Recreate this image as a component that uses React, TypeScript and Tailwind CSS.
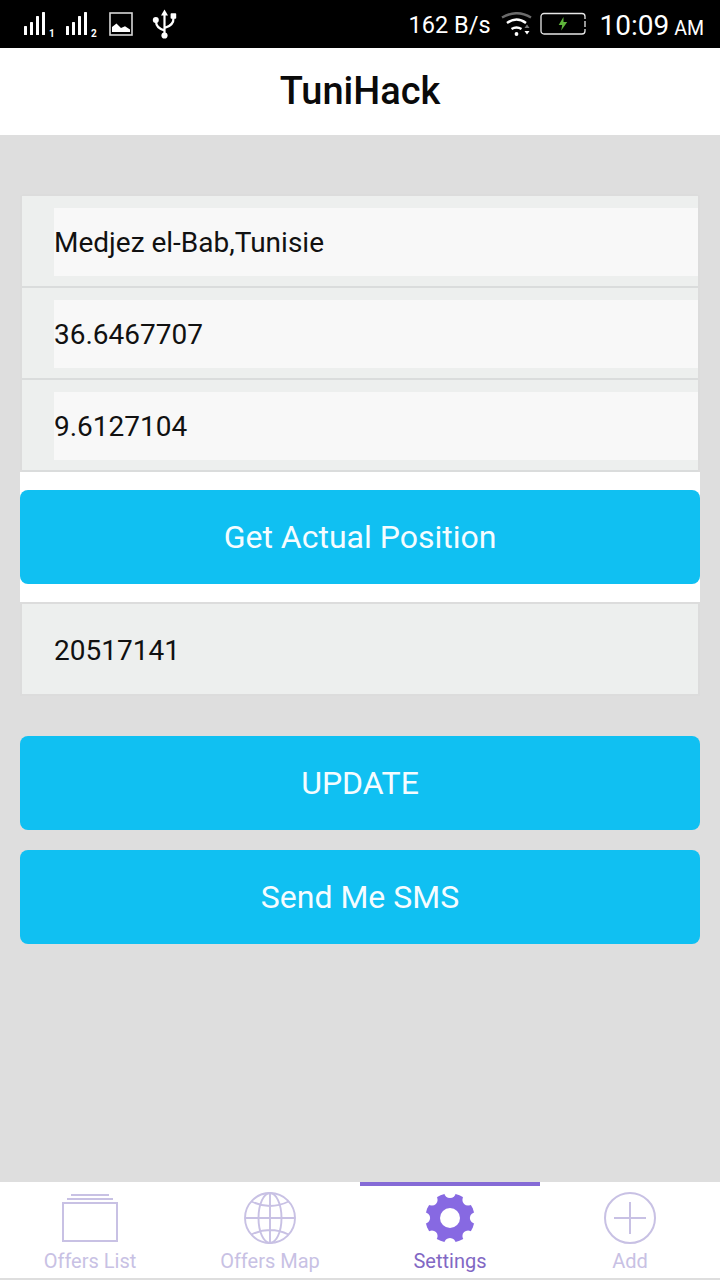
import type { ReactNode } from "react";

const SignalIcon = () => (
  <svg width="26" height="26" viewBox="0 0 26 26" fill="#fff">
    <rect x="0" y="14" width="3" height="9" rx="0.6" />
    <rect x="6" y="10" width="3" height="13" rx="0.6" />
    <rect x="12" y="4" width="3" height="19" rx="0.6" />
    <rect x="18" y="0" width="3" height="23" rx="0.6" />
  </svg>
);

const Signal = ({ sim }: { sim: string }) => (
  <div className="relative w-[42px] h-[26px]">
    <SignalIcon />
    <span className="absolute left-[25px] top-[17px] text-[10px] leading-[10px] font-bold">{sim}</span>
  </div>
);

const PictureIcon = () => (
  <svg width="24" height="24" viewBox="0 0 24 24">
    <rect x="1" y="1" width="22" height="22" fill="none" stroke="#d8d8d8" strokeWidth="1.6" />
    <path d="M3 20V15L7.5 11.5L12 16L16 14.2L21 17.5V20Z" fill="#fff" />
  </svg>
);

const UsbIcon = () => (
  <svg width="26" height="32" viewBox="0 0 26 32" fill="#fff">
    <path
      d="M12.5 5V26M4 12.5Q4 19 12.5 21.5M21.5 8.5Q22 16.5 12.5 19"
      fill="none"
      stroke="#fff"
      strokeWidth="2.2"
    />
    <path d="M12.5 0.5L16 6.5H9Z" />
    <circle cx="3.8" cy="11" r="3" />
    <rect x="18.6" y="4.2" width="5.6" height="5.6" rx="0.8" />
    <circle cx="12.5" cy="26.5" r="3.1" />
  </svg>
);

const WifiIcon = () => (
  <svg width="32" height="26" viewBox="0 0 32 26" fill="none" strokeWidth="2.5">
    <path d="M1 5.5Q15.5 -3 30 5.5" stroke="#6b6b6b" />
    <path d="M6 11Q15.5 4 25 11" stroke="#fff" />
    <path d="M10.5 17Q15.5 14 20.5 17" stroke="#fff" />
    <circle cx="15.5" cy="22" r="1.9" fill="#fff" />
    <path d="M23.5 16L26 12.5L28.5 16Z" fill="#777" />
    <path d="M23.5 19L26 22.5L28.5 19Z" fill="#fff" />
  </svg>
);

const BatteryIcon = () => (
  <svg width="46" height="24" viewBox="0 0 46 24">
    <rect x="1" y="1.5" width="44" height="20.5" rx="3" fill="none" stroke="#e8e8e8" strokeWidth="1.3" />
    <path d="M45 7V9M45 15V17" stroke="#000" strokeWidth="2.5" />
    <path d="M23.5 5L18.7 13H22.2L21.2 18.5L27.2 10H23.5Z" fill="#5fb53a" />
  </svg>
);

const ListIcon = () => (
  <svg width="56" height="56" viewBox="0 0 56 56" fill="none" stroke="currentColor" strokeWidth="2">
    <path d="M9 5H47M5 9H51" />
    <rect x="1" y="13" width="54" height="38" />
  </svg>
);

const GlobeIcon = () => (
  <svg width="56" height="56" viewBox="-28 -28 56 56" fill="none" stroke="currentColor" strokeWidth="1.9">
    <circle r="25" />
    <ellipse rx="11.5" ry="25" />
    <path d="M0 -25V25M-25 0H25M-18.5 -16.5Q0 -7.5 18.5 -16.5M-18.5 16.5Q0 7.5 18.5 16.5" />
  </svg>
);

const GearIcon = () => (
  <svg width="56" height="56" viewBox="-28 -28 56 56">
    <mask id="gear" maskUnits="userSpaceOnUse" x="-28" y="-28" width="56" height="56">
      <circle r="24.7" fill="#fff" />
      <circle r="10" fill="#000" />
      {[0, 45, 90, 135, 180, 225, 270, 315].map((a) => (
        <circle key={a} cy="-25.6" r="5.7" fill="#000" transform={`rotate(${a})`} />
      ))}
    </mask>
    <rect x="-28" y="-28" width="56" height="56" fill="#8769e2" mask="url(#gear)" />
  </svg>
);

const AddIcon = () => (
  <svg width="56" height="56" viewBox="-28 -28 56 56" fill="none" stroke="currentColor" strokeWidth="2">
    <circle r="25" />
    <path d="M0 -16V16M-16 0H16" />
  </svg>
);

const Field = ({ value }: { value: string }) => (
  <div className="h-[92px] border-b-2 border-[#dadcdc] bg-[#edefee] pt-3 pl-8">
    <div className="h-[68px] bg-[#f8f8f8] text-[28px] leading-[70px] text-[#111]">{value}</div>
  </div>
);

const BlueButton = ({ children }: { children: ReactNode }) => (
  <button className="block w-full h-[94px] rounded-lg bg-[#10c0f2] text-[32px] text-[#f5fcff]">
    {children}
  </button>
);

const tabs = [
  { label: "Offers List", icon: ListIcon },
  { label: "Offers Map", icon: GlobeIcon },
  { label: "Settings", icon: GearIcon, active: true },
  { label: "Add", icon: AddIcon },
];

export default function App() {
  return (
    <div className="flex flex-col w-[720px] h-[1280px] overflow-hidden bg-[#dedede] font-['Roboto',sans-serif]">
      {/* Status bar */}
      <div className="flex h-12 shrink-0 justify-between bg-black pl-6 pr-4 text-white">
        <div className="flex pt-3">
          <Signal sim="1" />
          <Signal sim="2" />
          <div className="ml-px">
            <PictureIcon />
          </div>
          <div className="-mt-[3px] ml-[19px]">
            <UsbIcon />
          </div>
        </div>
        <div className="flex whitespace-nowrap">
          <span className="mr-2.5 text-[23.5px] leading-[50px]">162 B/s</span>
          <div className="mr-[7px] pt-3">
            <WifiIcon />
          </div>
          <div className="mr-[14px] pt-3">
            <BatteryIcon />
          </div>
          <div className="flex items-baseline gap-[5px]">
            <span className="text-[28px] leading-[51px]">10:09</span>
            <span className="text-[19.5px]">AM</span>
          </div>
        </div>
      </div>

      {/* Header */}
      <header className="h-[87px] shrink-0 bg-white text-center">
        <h1 className="text-[38px] leading-[86px] font-medium text-[#0a0a0a]">TuniHack</h1>
      </header>

      {/* Form */}
      <main className="flex-1 px-5 pt-[59px]">
        <div className="rounded-t border-x-2 border-t-2 border-[#dcdcdc]">
          <Field value="Medjez el-Bab,Tunisie" />
          <Field value="36.6467707" />
          <Field value="9.6127104" />
        </div>
        <div className="bg-white py-[18px]">
          <BlueButton>Get Actual Position</BlueButton>
        </div>
        <div className="h-[94px] border-2 border-[#dcdcdc] bg-[#edefee] pl-8 text-[28px] leading-[94px] text-[#111]">
          20517141
        </div>
        <div className="mt-10 space-y-5">
          <BlueButton>UPDATE</BlueButton>
          <BlueButton>Send Me SMS</BlueButton>
        </div>
      </main>

      {/* Tab bar */}
      <nav className="grid h-[98px] shrink-0 grid-cols-4 border-b-2 border-[#dedede] bg-white">
        {tabs.map(({ label, icon: Icon, active }) => (
          <div
            key={label}
            className={`flex flex-col items-center border-t-4 pt-1 text-[20px] leading-[24px] ${
              active ? "border-[#856ad6] text-[#8268c4]" : "border-transparent text-[#c8c1e4]"
            }`}
          >
            <Icon />
            <span className="mt-[3px]">{label}</span>
          </div>
        ))}
      </nav>
    </div>
  );
}
